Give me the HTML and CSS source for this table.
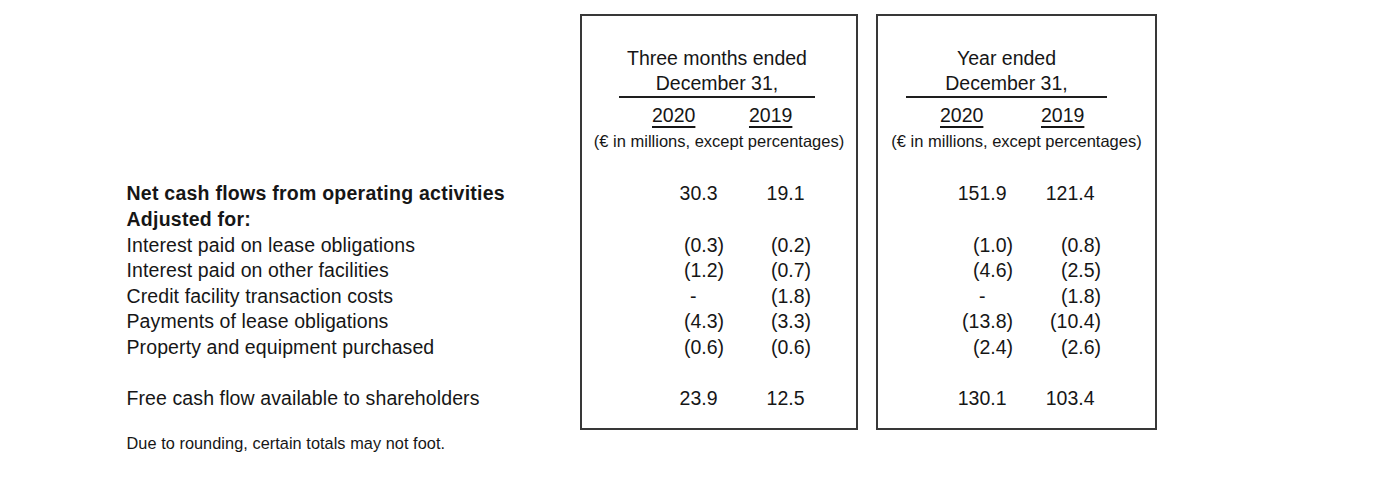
FILE: index.html
```html
<!DOCTYPE html>
<html lang="en">
<head>
<meta charset="utf-8">
<title>Free cash flow</title>
<link rel="stylesheet" href="styles.css">
</head>
<body>
<div class="sheet">
  <div class="labels">
    <div class="row bold">Net cash flows from operating activities</div>
    <div class="row bold">Adjusted for:</div>
    <div class="row">Interest paid on lease obligations</div>
    <div class="row">Interest paid on other facilities</div>
    <div class="row">Credit facility transaction costs</div>
    <div class="row">Payments of lease obligations</div>
    <div class="row">Property and equipment purchased</div>
    <div class="row"></div>
    <div class="row">Free cash flow available to shareholders</div>
    <p class="footnote">Due to rounding, certain totals may not foot.</p>
  </div>

  <div class="box box-q">
    <div class="head">
      <div class="title">Three months ended<br>December 31,</div>
      <div class="years"><span class="yr">2020</span><span class="yr">2019</span></div>
      <div class="unit">(€ in millions, except percentages)</div>
    </div>
    <div class="data">
      <span class="v pos">30.3</span><span class="v pos">19.1</span>
      <span class="v blank"></span><span class="v blank"></span>
      <span class="v">(0.3)</span><span class="v">(0.2)</span>
      <span class="v">(1.2)</span><span class="v">(0.7)</span>
      <span class="v dash">-</span><span class="v">(1.8)</span>
      <span class="v">(4.3)</span><span class="v">(3.3)</span>
      <span class="v">(0.6)</span><span class="v">(0.6)</span>
      <span class="v blank"></span><span class="v blank"></span>
      <span class="v pos">23.9</span><span class="v pos">12.5</span>
    </div>
  </div>

  <div class="box box-y">
    <div class="head">
      <div class="title">Year ended<br>December 31,</div>
      <div class="years"><span class="yr">2020</span><span class="yr">2019</span></div>
      <div class="unit">(€ in millions, except percentages)</div>
    </div>
    <div class="data">
      <span class="v pos">151.9</span><span class="v pos">121.4</span>
      <span class="v blank"></span><span class="v blank"></span>
      <span class="v">(1.0)</span><span class="v">(0.8)</span>
      <span class="v">(4.6)</span><span class="v">(2.5)</span>
      <span class="v dash">-</span><span class="v">(1.8)</span>
      <span class="v">(13.8)</span><span class="v">(10.4)</span>
      <span class="v">(2.4)</span><span class="v">(2.6)</span>
      <span class="v blank"></span><span class="v blank"></span>
      <span class="v pos">130.1</span><span class="v pos">103.4</span>
    </div>
  </div>
</div>
</body>
</html>
```

FILE: styles.css
```css
html, body {
  margin: 0;
  padding: 0;
  background: #ffffff;
}

body {
  font-family: "Liberation Sans", Arial, sans-serif;
  font-size: 19.5px;
  color: #161616;
}

.sheet {
  display: flex;
  align-items: flex-start;
  padding-left: 126.5px;
}

/* left label column */
.labels {
  width: 453.5px;
  padding-top: 181.44px;
}

.row {
  height: 25.6px;
  line-height: 25.6px;
  white-space: nowrap;
  letter-spacing: 0.1px;
}

.bold {
  font-weight: bold;
  letter-spacing: 0.25px;
}

.footnote {
  margin: 21.4px 0 0;
  font-size: 16.3px;
  line-height: 20px;
  letter-spacing: 0.06px;
  white-space: nowrap;
}

/* boxes */
.box {
  margin-top: 14px;
  border: 2px solid #383838;
  padding-bottom: 16.5px;
}

.box-q {
  width: 274px;
}

.box-y {
  width: 277px;
  margin-left: 18px;
}

.head {
  padding-top: 29.75px;
}

.title {
  line-height: 25px;
  text-align: center;
  border-bottom: 2px solid #1e1e1e;
}

.box-q .title {
  margin-left: 37px;
  width: 196px;
}

.box-y .title {
  margin-left: 28px;
  width: 201px;
}

.years {
  display: flex;
  margin-top: 5px;
  line-height: 25px;
}

.yr {
  text-decoration: underline;
  text-decoration-thickness: 2px;
  text-underline-offset: 3.5px;
}

.box-q .years {
  padding-left: 70px;
  gap: 53.6px;
}

.box-y .years {
  padding-left: 62px;
  gap: 57.6px;
}

.unit {
  margin-top: 3.5px;
  font-size: 16.5px;
  line-height: 20px;
  text-align: center;
  white-space: nowrap;
}

.data {
  display: grid;
  margin-top: 30.15px;
  grid-auto-rows: 25.6px;
  line-height: 25.6px;
}

.box-q .data {
  grid-template-columns: 142px 87px;
}

.box-y .data {
  grid-template-columns: 135px 88px;
}

.v {
  text-align: right;
  white-space: nowrap;
}

.v.pos {
  padding-right: 6.5px;
}

.v.dash {
  padding-right: 27.5px;
}
```
